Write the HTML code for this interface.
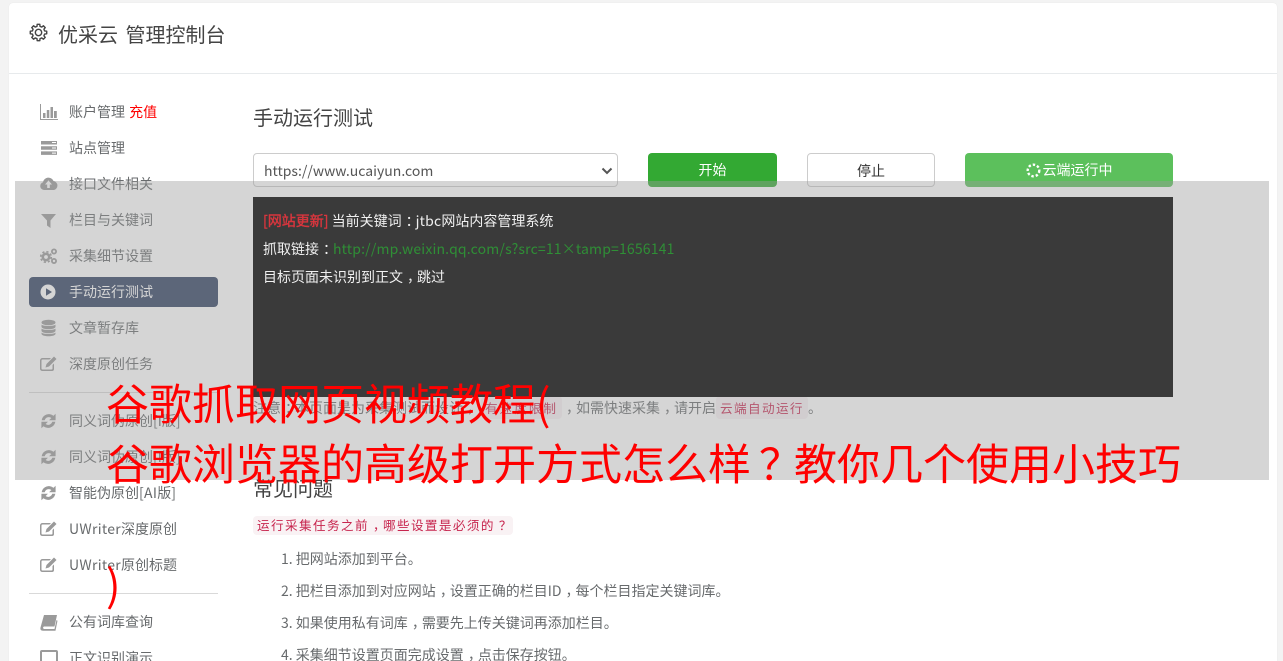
<!DOCTYPE html>
<html lang="zh-CN">
<head>
<meta charset="utf-8">
<title>优采云 管理控制台</title>
<style>
html,body{margin:0;padding:0;width:1283px;height:661px;overflow:hidden;background:#f3f3f3}
body{position:relative;font-family:"WenQuanYi Zen Hei","Noto Sans CJK SC",sans-serif;font-size:14px;color:#666}
.a{position:absolute;white-space:nowrap}
#card{position:absolute;left:9px;top:3px;width:1268px;height:670px;background:#fff;border-radius:4px;box-shadow:0 0 1px #ddd}
#hl{position:absolute;left:9px;top:73px;width:1268px;height:1px;background:#e7eaec}
.t{left:69px;line-height:20px;color:#676a6c}
.l{letter-spacing:.3px}
.p{position:relative;left:4px}
.ic{position:absolute;left:39px;width:19px;height:18px;fill:#9a9a9a;stroke:none}
.hr{position:absolute;left:29px;width:189px;height:1px;background:#d9d9d9}
#active{position:absolute;left:29px;top:277px;width:189px;height:30px;background:#2f4161;border-radius:4px}
.btn{position:absolute;top:153px;height:34px;box-sizing:border-box;border-radius:4px;text-align:center;line-height:34px;font-size:14px}
#select{position:absolute;left:253px;top:153px;width:365px;height:34px;box-sizing:border-box;border:1px solid #ccc;border-radius:4px;background:#fff;padding-left:10px;line-height:34px;font-size:14px;color:#555}
#overlay{position:absolute;left:15px;top:181px;width:1254px;height:299px;background:rgba(155,155,155,.42);z-index:2}
#panel{position:absolute;left:253px;top:197px;width:920px;height:200px;background:#3a3a3a;z-index:3;color:#f0f0f0}
#panel div{position:absolute;left:10px;white-space:nowrap;line-height:20px}
code{font-family:inherit;color:#c7254e;background:#f9f2f4;border-radius:4px;padding:2px 4px;font-size:12.6px;letter-spacing:1.4px}
.big{position:absolute;left:106px;z-index:5;color:#f00;font-size:43px;line-height:60px;white-space:nowrap;font-family:"WenQuanYi Zen Hei","Noto Sans CJK SC",sans-serif;font-weight:400}
.li{left:281px;line-height:20px;color:#676a6c}
.r{stroke:#9a9a9a;stroke-width:.6}
</style>
</head>
<body>
<div id="card"></div>
<div id="hl"></div>

<svg class="a" style="left:29px;top:23px" width="19" height="19" viewBox="0 0 24 24" fill="none" stroke="#444" stroke-width="1.8" stroke-linejoin="round"><circle cx="12" cy="12" r="4"/><path d="M10.06 4.24L10.36 1.63H13.64L13.94 4.24L16.12 5.14L18.17 3.5L20.5 5.83L18.86 7.88L19.76 10.06L22.37 10.36V13.64L19.76 13.94L18.86 16.12L20.5 18.17L18.17 20.5L16.12 18.86L13.94 19.76L13.64 22.37H10.36L10.06 19.76L7.88 18.86L5.83 20.5L3.5 18.17L5.14 16.12L4.24 13.94L1.63 13.64V10.36L4.24 10.06L5.14 7.88L3.5 5.83L5.83 3.5L7.88 5.14Z"/></svg>
<div class="a" style="left:58px;top:20px;font-size:20px;line-height:28px;color:#444;word-spacing:3px">优采云 管理控制台</div>

<!-- sidebar -->
<svg class="ic" style="top:103px" viewBox="0 0 19 18"><path d="M1 1h1v15h17v1H1z"/><path d="M4 10h2.500v5H4zM7.800 7h2.500v8H7.800zM11.500 4H14v11h-2.500zM15 8h2.800v7H15z"/></svg>
<div class="a t" style="top:102px;word-spacing:1px">账户管理 <span style="color:#f00">充值</span></div>

<svg class="ic" style="top:139px" viewBox="0 0 19 18"><path d="M2 2h16v3.500H2zM2 7.200h16v3.500H2zM2 12.400h16v3.500H2z"/><path fill="#fff" d="M13 3h4v1h-4zM13 8.500h4v1h-4zM13 13.600h4v1h-4z"/></svg>
<div class="a t" style="top:138px">站点管理</div>

<svg class="ic" style="top:175px" viewBox="0 0 19 18"><path d="M5 15a4 4 0 0 1-1-7.800A5.500 5.500 0 0 1 14.500 6 4.600 4.600 0 0 1 15 15z"/><path fill="#fff" d="M9.500 5.500l3.500 4h-2.200V13H8.200V9.500H6z"/></svg>
<div class="a t" style="top:174px">接口文件相关</div>

<svg class="ic" style="top:211px" viewBox="0 0 19 18"><path d="M2 3h15l-5.500 6.500V17l-3.500-2.500V9.500z"/></svg>
<div class="a t" style="top:210px">栏目与关键词</div>

<svg class="ic" style="top:247px" viewBox="0 0 19 18" fill="none"><circle cx="7" cy="10" r="3.200" fill="none" stroke="#9a9a9a" stroke-width="2.600"/><circle cx="7" cy="10" r="5.300" fill="none" stroke="#9a9a9a" stroke-width="1.600" stroke-dasharray="2.200 2"/><circle cx="15" cy="4.500" r="2.100" fill="none" stroke="#9a9a9a" stroke-width="1.800"/><circle cx="15" cy="14" r="2.100" fill="none" stroke="#9a9a9a" stroke-width="1.800"/></svg>
<div class="a t" style="top:246px">采集细节设置</div>

<div id="active"></div>
<svg class="ic" style="top:283px" viewBox="0 0 19 18"><circle cx="9" cy="9" r="7.500" fill="#fff"/><path d="M7 5.200l6 3.800-6 3.800z" fill="#2f4161"/></svg>
<div class="a t" style="top:282px;color:#fff">手动运行测试</div>

<svg class="ic" style="top:319px" viewBox="0 0 19 18"><ellipse cx="9.500" cy="3.500" rx="7" ry="2.800"/><path d="M2.500 5.500c1 2 13 2 14 0V8c-1 3-13 3-14 0zM2.500 9.500c1 2 13 2 14 0V12c-1 3-13 3-14 0zM2.500 13.500c1 2 13 2 14 0V15c-1 3-13 3-14 0z"/></svg>
<div class="a t" style="top:318px">文章暂存库</div>

<svg class="ic" style="top:355px" viewBox="0 0 19 18"><path fill-rule="evenodd" d="M3.500 3H12l-1.500 1.500h-7A1 1 0 0 0 2.500 5.500v8a1 1 0 0 0 1 1h9a1 1 0 0 0 1-1V10L15 8.500v5.500A2 2 0 0 1 13 16H3.500A2.500 2.500 0 0 1 1 14V5.500A2.500 2.500 0 0 1 3.500 3z"/><path d="M15 1.500l2.500 2.500L10 11.500 6.500 12.500 7.500 9z"/></svg>
<div class="a t" style="top:354px">深度原创任务</div>

<div class="hr" style="top:392px"></div>

<svg class="ic r" style="top:412px" viewBox="0 0 19 18"><path d="M3 8a7 7 0 0 1 11.500-3.800L16.300 2.500V8h-5.500l2-2a4.500 4.500 0 0 0-7.300 2zM16 10a7 7 0 0 1-11.500 3.800L2.700 15.500V10h5.500l-2 2a4.500 4.500 0 0 0 7.300-2z"/></svg>
<div class="a t" style="top:411px">同义词伪原创[I版]</div>

<svg class="ic r" style="top:448px" viewBox="0 0 19 18"><path d="M3 8a7 7 0 0 1 11.500-3.800L16.300 2.500V8h-5.500l2-2a4.500 4.500 0 0 0-7.300 2zM16 10a7 7 0 0 1-11.500 3.800L2.700 15.500V10h5.500l-2 2a4.500 4.500 0 0 0 7.300-2z"/></svg>
<div class="a t" style="top:447px">同义词伪原创[I版]</div>

<svg class="ic r" style="top:484px" viewBox="0 0 19 18"><path d="M3 8a7 7 0 0 1 11.500-3.800L16.300 2.500V8h-5.500l2-2a4.500 4.500 0 0 0-7.300 2zM16 10a7 7 0 0 1-11.500 3.800L2.700 15.500V10h5.500l-2 2a4.500 4.500 0 0 0 7.300-2z"/></svg>
<div class="a t" style="top:483px">智能伪原创<span class="l">[AI</span>版<span class="l">]</span></div>

<svg class="ic" style="top:520px" viewBox="0 0 19 18"><path fill-rule="evenodd" d="M3.500 3H12l-1.500 1.500h-7A1 1 0 0 0 2.500 5.500v8a1 1 0 0 0 1 1h9a1 1 0 0 0 1-1V10L15 8.500v5.500A2 2 0 0 1 13 16H3.500A2.500 2.500 0 0 1 1 14V5.500A2.500 2.500 0 0 1 3.500 3z"/><path d="M15 1.500l2.500 2.500L10 11.500 6.500 12.500 7.500 9z"/></svg>
<div class="a t" style="top:519px"><span class="l">UWriter</span>深度原创</div>

<svg class="ic" style="top:556px" viewBox="0 0 19 18"><path fill-rule="evenodd" d="M3.500 3H12l-1.500 1.500h-7A1 1 0 0 0 2.500 5.500v8a1 1 0 0 0 1 1h9a1 1 0 0 0 1-1V10L15 8.500v5.500A2 2 0 0 1 13 16H3.500A2.500 2.500 0 0 1 1 14V5.500A2.500 2.500 0 0 1 3.500 3z"/><path d="M15 1.500l2.500 2.500L10 11.500 6.500 12.500 7.500 9z"/></svg>
<div class="a t" style="top:555px"><span class="l">UWriter</span>原创标题</div>

<div class="hr" style="top:593px"></div>

<svg class="ic" style="top:613px" viewBox="0 0 19 18"><path d="M5 2h13l-2.500 11.500H5a1.300 1.300 0 0 0 0 2.500h10.500l2-9 1 .7-2 10H4C2 17.700 1 16.500 1.500 14.500z"/></svg>
<div class="a t" style="top:612px">公有词库查询</div>

<svg class="ic" style="top:649px" viewBox="0 0 19 18"><path fill-rule="evenodd" d="M3 1h14a2 2 0 0 1 2 2v11H1V3a2 2 0 0 1 2-2zM3 3v9h14V3z"/></svg>
<div class="a t" style="top:648px">正文识别演示</div>

<!-- main -->
<div class="a" style="left:253px;top:103px;font-size:20px;line-height:28px;color:#444">手动运行测试</div>

<div id="select">https://www.ucaiyun.com
<svg style="position:absolute;right:4px;top:12px" width="12" height="10" viewBox="0 0 12 10"><path d="M1.500 2.500L6 7l4.500-4.500" fill="none" stroke="#555" stroke-width="2"/></svg></div>

<div class="btn" style="left:648px;width:129px;background:#33a933;color:#fff">开始</div>
<div class="btn" style="left:807px;width:128px;background:#fff;border:1px solid #ccc;color:#333;line-height:35px">停止</div>
<div class="btn" style="left:965px;width:208px;background:#5cc05c;color:#fff">
<svg style="vertical-align:-3px;margin-right:2px" width="15" height="15" viewBox="0 0 15 15"><circle cx="7.500" cy="7.500" r="5.800" fill="none" stroke="#fff" stroke-width="2.400" stroke-dasharray="2.400 2"/></svg>云端运行中</div>

<div id="overlay"></div>

<div id="panel">
<div style="top:14px"><b style="color:#d9363e;font-weight:400;-webkit-text-stroke:.4px #d9363e">[网站更新]</b> 当前关键词<span class="p">：</span><span style="letter-spacing:.2px">jtbc</span>网站内容管理系统</div>
<div style="top:42px">抓取链接<span class="p">：</span><span style="color:#2f8f36;letter-spacing:.17px">http://mp.weixin.qq.com/s?src=11×tamp=1656141</span></div>
<div style="top:70px">目标页面未识别到正文<span class="p">，</span>跳过</div>
</div>

<div class="a" style="left:253px;top:398px;line-height:20px;color:#676a6c">注意<span class="p">：</span>本页面是为采集测试而设计<span class="p">，</span><span style="display:inline-block;width:4px"></span><code style="letter-spacing:2px">有速度限制</code><span class="p">，</span>如需快速采集<span class="p">，</span>请开启<code>云端自动运行</code>。</div>

<div class="a" style="left:253px;top:474px;font-size:20px;line-height:28px;color:#444">常见问题</div>

<div class="a" style="left:253px;top:516px;height:19px;width:260px;box-sizing:border-box;background:#f9f2f4;border-radius:4px;padding-left:4px;color:#c7254e;font-size:12.6px;letter-spacing:1.4px;line-height:18px">运行采集任务之前<span class="p">，</span>哪些设置是必须的<span class="p">？</span></div>

<div class="a li" style="top:549px">1. 把网站添加到平台。</div>
<div class="a li" style="top:581px">2. 把栏目添加到对应网站<span class="p">，</span>设置正确的栏目ID<span class="p">，</span>每个栏目指定关键词库。</div>
<div class="a li" style="top:613px">3. 如果使用私有词库<span class="p">，</span>需要先上传关键词再添加栏目。</div>
<div class="a li" style="top:645px">4. 采集细节设置页面完成设置<span class="p">，</span>点击保存按钮。</div>

<!-- headline overlay -->
<div class="big" style="top:372px">谷歌抓取网页视频教程(</div>
<div class="big" style="top:432px">谷歌浏览器的高级打开方式怎么样<span style="position:relative;left:8px">？</span>教你几个使用小技巧</div>
<div class="big" style="top:553px">)</div>
</body>
</html>
